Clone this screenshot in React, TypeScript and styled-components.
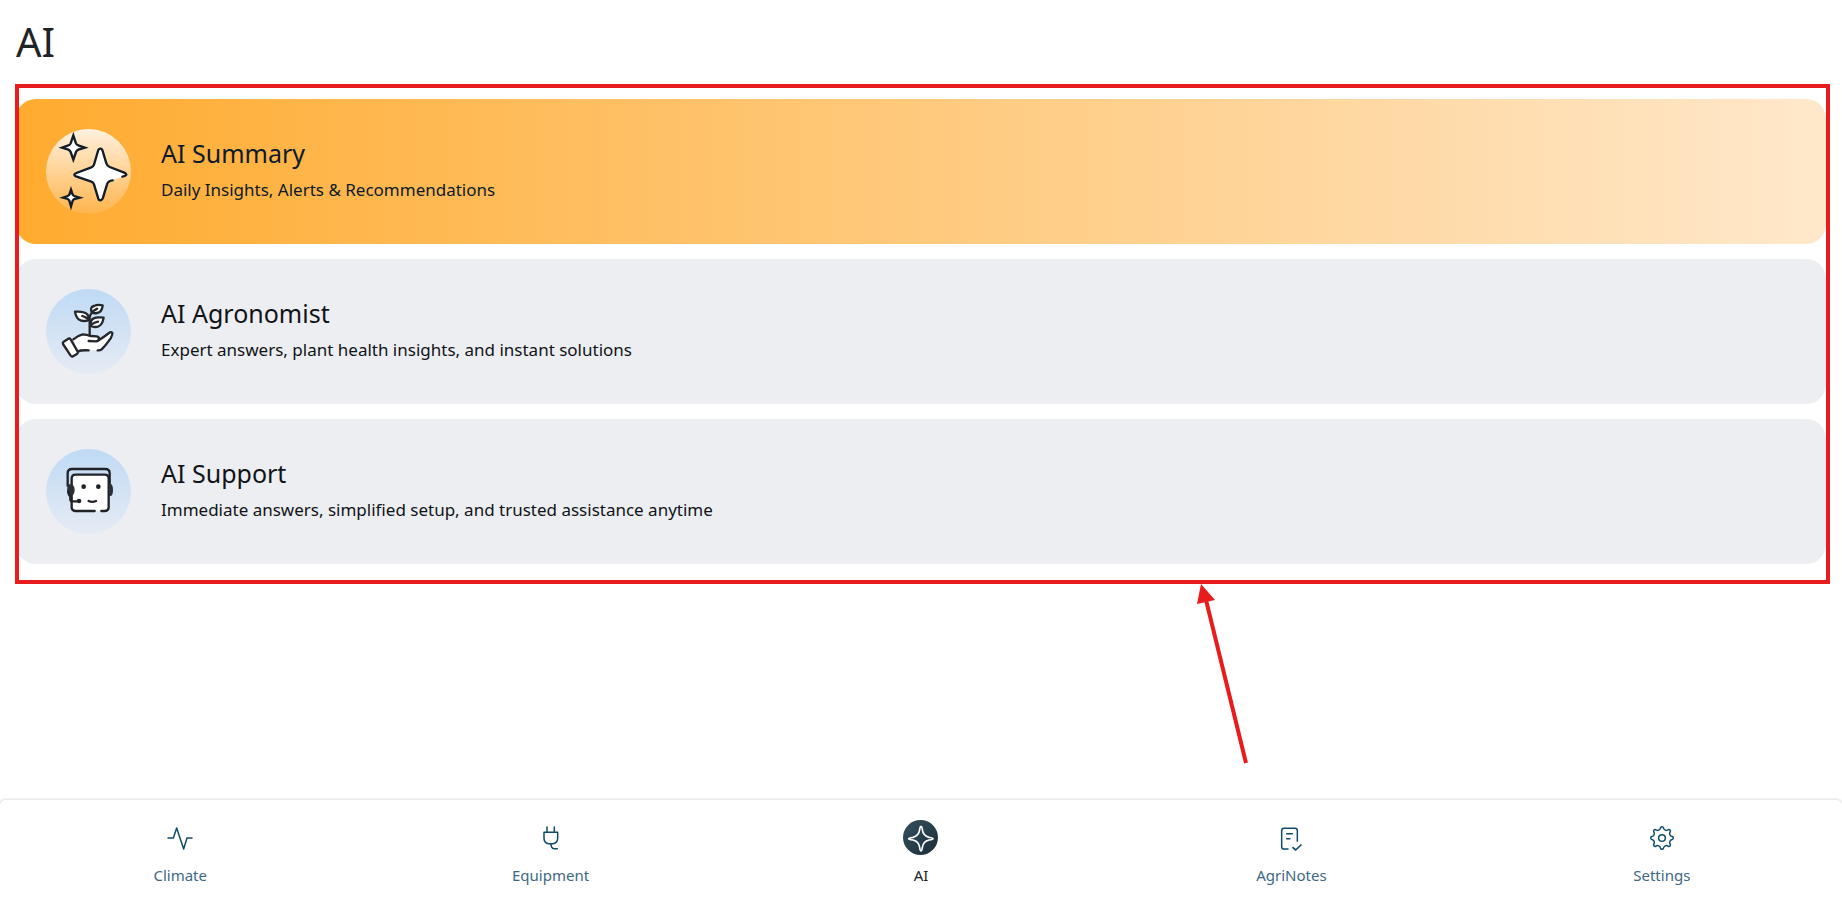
import React from "react";
import styled, { createGlobalStyle } from "styled-components";

const GlobalStyle = createGlobalStyle`
  *, *::before, *::after { box-sizing: border-box; }
  body {
    margin: 0;
    background: #ffffff;
    color: #1f2426;
    font-family: "Noto Sans", sans-serif;
  }
`;

const Page = styled.div`
  display: flex;
  flex-direction: column;
  min-height: 100vh;
`;

const Main = styled.main`
  flex: 1;
  padding: 16px;
`;

const PageTitle = styled.h1`
  margin: 0 0 31px;
  font-size: 40px;
  font-weight: 400;
  line-height: 52px;
`;

const CardList = styled.div`
  position: relative;
  display: flex;
  flex-direction: column;
  gap: 15px;
`;

const Card = styled.a<{ $active?: boolean }>`
  display: flex;
  align-items: center;
  gap: 30px;
  padding: 30px;
  border-radius: 20px;
  color: ${(p) => (p.$active ? "#0c1a2b" : "#101418")};
  background: ${(p) =>
    p.$active ? "linear-gradient(90deg, #ffab2f 0%, #ffe8cb 100%)" : "#edeef2"};
  text-decoration: none;
`;

const Badge = styled.span<{ $active?: boolean }>`
  flex: none;
  width: 85px;
  height: 85px;
  border-radius: 50%;
  background: ${(p) =>
    p.$active
      ? "linear-gradient(180deg, #fff1df 0%, #ffb54c 100%)"
      : "linear-gradient(180deg, #bfdaf5 0%, #e6ebf4 100%)"};

  svg { display: block; width: 100%; height: 100%; }
`;

const CardText = styled.div`
  display: flex;
  flex-direction: column;
  gap: 5px;
  padding-bottom: 4px;
`;

const CardTitle = styled.h2`
  margin: 0;
  font-size: 25px;
  font-weight: 400;
  line-height: 36px;
`;

const CardSubtitle = styled.p`
  margin: 0;
  font-size: 17px;
  line-height: 28px;
`;

const Highlight = styled.div`
  position: absolute;
  inset: -15px -4px -20px -1px;
  border: 4px solid #e81c1c;
  pointer-events: none;
`;

const Pointer = styled.svg`
  position: absolute;
  top: calc(100% + 20px);
  left: 65%;
  width: 60px;
  height: 184px;
  pointer-events: none;
`;

const NavBar = styled.nav`
  display: grid;
  grid-template-columns: repeat(5, 1fr);
  gap: 10px;
  padding: 20px 0 12px;
  border-radius: 5px 5px 0 0;
  background: #ffffff;
  box-shadow: 0 0 3px rgba(0, 0, 0, 0.25);
`;

const NavItem = styled.a<{ $active?: boolean }>`
  display: flex;
  flex-direction: column;
  align-items: center;
  gap: 10px;
  color: ${(p) => (p.$active ? "#1b1f22" : "#3d6884")};
  font-size: 15px;
  line-height: 20px;
  text-decoration: none;
`;

const NavIcon = styled.span<{ $active?: boolean }>`
  display: flex;
  align-items: center;
  justify-content: center;
  width: 35px;
  height: 35px;
  border-radius: 50%;
  color: ${(p) => (p.$active ? "#ffffff" : "#0f4a69")};
  background: ${(p) =>
    p.$active ? "linear-gradient(135deg, #34505f, #1c2d38)" : "none"};

  svg {
    width: 24px;
    height: 24px;
    overflow: visible;
    fill: none;
    stroke: currentColor;
    stroke-width: 4.5;
    stroke-linecap: round;
    stroke-linejoin: round;
  }
`;

const SparklesIcon = () => (
  <svg viewBox="48 42 255 255" aria-hidden="true" stroke="#131d29" strokeWidth="7" strokeMiterlimit="10">
    <g fill="#fff">
      <path d="M130 61 L138 85 Q140 90 145 91 L165 98 L145 104 Q140 106 138 111 L130 134 L122 111 Q120 106 115 104 L96 98 L115 91 Q120 90 122 85Z" />
      <path d="M123 224 L128 239 Q130 242 133 243 L149 248 L133 252 Q130 254 128 257 L123 274 L118 257 Q116 254 113 252 L99 248 L113 243 Q116 242 118 239Z" />
    </g>
    <path
      d="M211 101 Q216 101 218 108 L229 145 Q231 153 239 156 L283 173 Q289 176 289 179 Q287 183 277 185 L248 196 Q234 197 231 208 L219 248 Q216 256 211 256 Q206 256 204 248 L192 208 Q190 202 184 200 L138 184 Q133 182 133 179 Q134 176 139 174 L184 157 Q190 155 192 149 L204 108 Q206 101 211 101Z"
      fill="#fff"
      stroke="none"
    />
    <path
      d="M248 196 Q234 197 231 208 L219 248 Q216 256 211 256 Q206 256 204 248 L192 208 Q190 202 184 200 L138 184 Q133 182 133 179 Q134 176 139 174 L184 157 Q190 155 192 149 L204 108 Q206 101 211 101 Q216 101 218 108 L229 145 Q231 153 239 156 L283 173 Q289 176 289 179 Q287 183 277 185"
      fill="none"
      strokeLinecap="round"
      strokeLinejoin="round"
    />
  </svg>
);

const PlantIcon = () => (
  <svg
    viewBox="48 42 255 255"
    aria-hidden="true"
    fill="none"
    stroke="#24272b"
    strokeWidth="7"
    strokeLinecap="round"
    strokeLinejoin="round"
  >
    <path
      d="M130 193 Q143 182 158 178 Q170 179 182 183 L200 184 Q208 186 208 191 L212 193 L237 174 Q243 169 247 174 Q248 179 242 190 Q228 210 215 223 Q210 227 203 226 L152 226 L145 232Z"
      fill="#fff"
      stroke="none"
    />
    <path d="M130 193 Q143 182 158 178 Q170 179 182 183 L200 184 Q208 186 207 192 Q206 198 198 199 L176 198" />
    <path d="M206 196 Q223 185 237 174 Q243 169 247 174 Q248 179 242 190 Q228 210 215 223 Q210 227 203 226" />
    <path d="M146 229 Q150 225 176 226" />
    <path d="M101 200 L115 191 Q119 189 122 193 L143 230 Q145 234 141 237 L129 244 Q125 246 122 242 L99 207 Q97 203 101 200Z" fill="#fff" />
    <path d="M179 182 V128 Q179 116 195 107" strokeWidth="7" />
    <path d="M185 112 Q179 96 192 93 Q202 88 218 91 Q216 112 201 114 Q191 116 185 112Z" fill="#fff" />
    <path d="M135 110 Q161 108 171 117 Q179 126 175 136 Q157 141 146 133 Q138 127 135 110Z" fill="#fff" />
    <path d="M182 153 Q180 135 191 130 Q202 125 221 128 Q217 151 204 155 Q192 158 182 153Z" fill="#fff" />
    <path d="M189 109 L201 101 M157 123 Q167 126 174 132 M184 149 Q192 142 204 140" />
  </svg>
);

const SupportIcon = () => (
  <svg
    viewBox="48 42 255 255"
    aria-hidden="true"
    fill="none"
    stroke="#1f2328"
    strokeWidth="7"
    strokeLinecap="round"
    strokeLinejoin="round"
  >
    <path d="M113 152 V115 Q113 102 126 102 H226 Q239 102 239 115 V152" />
    <rect x="125" y="119" width="111" height="109" rx="12" fill="#fff" stroke="none" />
    <path d="M194 228 H137 Q125 228 125 216 V131 Q125 119 137 119 H224 Q236 119 236 131 V216 Q236 228 224 228 H214" />
    <path d="M113 148 H122 Q134 150 134 165 Q134 180 123 183 Q112 180 111 169Z" fill="#2c3036" stroke="none" />
    <path d="M237 147 H243 Q249 151 249 165 Q249 180 243 183 H237Z" fill="#2c3036" stroke="none" />
    <path d="M115 170 Q116 181 121 184 V194 Q122 199 128 199 H140" />
    <g fill="#1f2328" stroke="none">
      <circle cx="147" cy="198" r="7" />
      <circle cx="161" cy="155" r="7" />
      <circle cx="205" cy="155" r="7" />
    </g>
    <path d="M176 198 Q187 203 198 198" />
  </svg>
);

const ClimateIcon = () => (
  <svg viewBox="206 106 72 72" aria-hidden="true">
    <path d="M206 142 H222 L232 112 L253 175 L263 142 H278" />
  </svg>
);

const PlugIcon = () => (
  <svg viewBox="1321 106 72 72" aria-hidden="true">
    <path d="M1345 109 V122 M1367 109 V122 M1336 125 H1377 V144 Q1376 158 1363 159 H1350 Q1337 158 1336 144Z M1357 160 Q1357 173 1366 174 H1376" />
  </svg>
);

const StarIcon = () => (
  <svg viewBox="151 106 72 72" aria-hidden="true">
    <path
      strokeWidth="5"
      d="M187 107 C190 107 190 111 191 117 C193 132 199 137 211 140 C218 141 223 142 223 144 C223 146 218 147 211 148 C199 151 193 156 191 170 C190 177 189 181 187 181 C185 181 184 177 183 170 C181 156 175 151 163 148 C156 147 150 146 150 144 C150 142 156 141 163 140 C175 137 181 132 183 117 C184 111 184 107 187 107Z"
    />
  </svg>
);

const NotesIcon = () => (
  <svg viewBox="1261 106 72 72" aria-hidden="true">
    <path d="M1288 175 H1276 Q1269 175 1269 168 V120 Q1269 113 1276 113 H1309 Q1316 113 1316 120 V152 M1284 129 H1301 M1284 144 H1294" />
    <path d="M1303 171 L1311 178 L1327 163" strokeWidth="5" />
  </svg>
);

/* Outline of an eight-toothed wheel: rounded knobs joined by concave arcs. */
const gearPath = (() => {
  const at = (radius: number, degrees: number) => {
    const a = (degrees * Math.PI) / 180;
    return `${(36 + radius * Math.sin(a)).toFixed(2)} ${(36 - radius * Math.cos(a)).toFixed(2)}`;
  };
  let d = `M${at(31, -8)}`;
  for (let tooth = 0; tooth < 8; tooth++) {
    const c = tooth * 45;
    d += `A4.5 4.5 0 0 1 ${at(31, c + 8)}`;
    d += `A9 9 0 0 0 ${at(31, c + 37)}`;
  }
  return `${d}Z`;
})();

const GearIcon = () => (
  <svg viewBox="0 0 72 72" aria-hidden="true">
    <path d={gearPath} />
    <circle cx="36" cy="36" r="10" />
  </svg>
);

const cards = [
  { title: "AI Summary", text: "Daily Insights, Alerts & Recommendations", Icon: SparklesIcon, active: true },
  { title: "AI Agronomist", text: "Expert answers, plant health insights, and instant solutions", Icon: PlantIcon, active: false },
  { title: "AI Support", text: "Immediate answers, simplified setup, and trusted assistance anytime", Icon: SupportIcon, active: false },
];

const navItems = [
  { label: "Climate", Icon: ClimateIcon, active: false },
  { label: "Equipment", Icon: PlugIcon, active: false },
  { label: "AI", Icon: StarIcon, active: true },
  { label: "AgriNotes", Icon: NotesIcon, active: false },
  { label: "Settings", Icon: GearIcon, active: false },
];

export default function App() {
  return (
    <Page>
      <GlobalStyle />
      <Main>
        <PageTitle>AI</PageTitle>
        <CardList>
          {cards.map(({ title, text, Icon, active }) => (
            <Card key={title} href="#" $active={active}>
              <Badge $active={active}>
                <Icon />
              </Badge>
              <CardText>
                <CardTitle>{title}</CardTitle>
                <CardSubtitle>{text}</CardSubtitle>
              </CardText>
            </Card>
          ))}
          <Highlight />
          <Pointer viewBox="0 0 60 184" aria-hidden="true">
            <path d="M13 16 L53 179" stroke="#e81c1c" strokeWidth="4" />
            <path d="M8 0 L22 16 L4 20Z" fill="#e81c1c" />
          </Pointer>
        </CardList>
      </Main>
      <NavBar aria-label="Main">
        {navItems.map(({ label, Icon, active }) => (
          <NavItem key={label} href="#" $active={active} aria-current={active ? "page" : undefined}>
            <NavIcon $active={active}>
              <Icon />
            </NavIcon>
            {label}
          </NavItem>
        ))}
      </NavBar>
    </Page>
  );
}
